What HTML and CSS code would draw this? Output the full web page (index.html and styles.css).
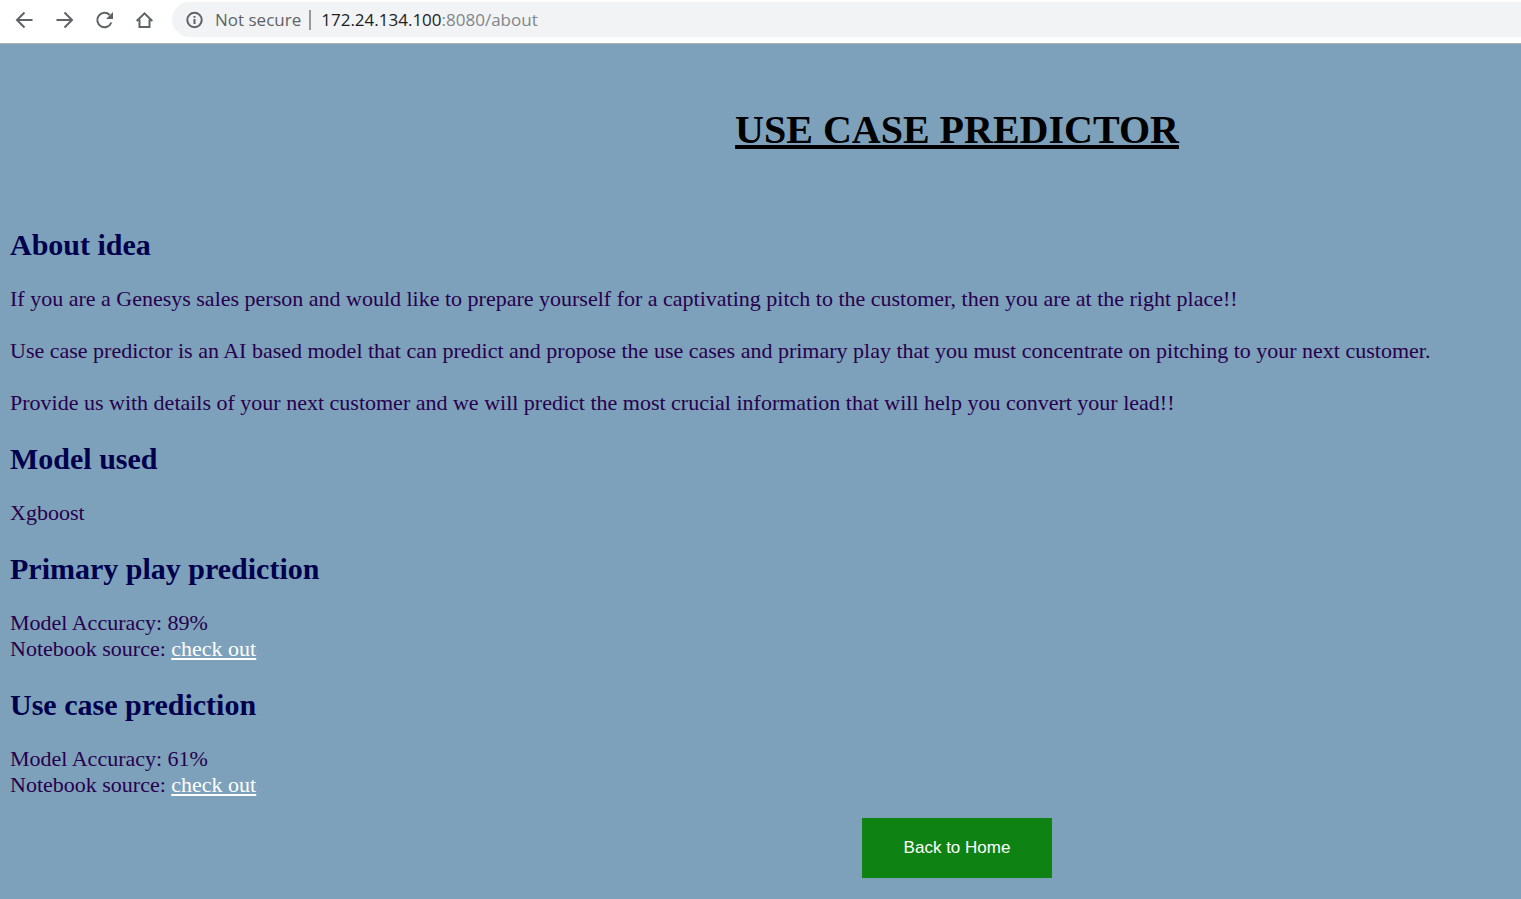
FILE: index.html
```html
<!DOCTYPE html>
<html lang="en">
<head>
<meta charset="utf-8">
<title>Use Case Predictor</title>
<link rel="stylesheet" href="styles.css">
</head>
<body>
<header class="toolbar">
  <nav class="controls" aria-label="Browser">
    <button class="tool" type="button" aria-label="Back"><svg viewBox="0 0 20 20"><path d="M18.500 10H3.500M10.500 2.500L3 10L10.500 17.500"/></svg></button>
    <button class="tool" type="button" aria-label="Forward"><svg viewBox="0 0 20 20"><path d="M2.500 10H17.500M10.500 2.500L18 10L10.500 17.500"/></svg></button>
    <button class="tool" type="button" aria-label="Reload"><svg viewBox="0 0 20 20"><path d="M17.300 12.500A7.200 7.200 0 1 1 15.700 5"/><path class="solid" d="M19 2V9H12Z"/></svg></button>
    <button class="tool" type="button" aria-label="Home"><svg viewBox="0 0 20 20"><path d="M2.700 11L10.500 3.300L18.300 11M5.500 9.500V17H15.500V9.500"/></svg></button>
  </nav>
  <div class="address">
    <svg class="info" viewBox="0 0 18 18"><circle cx="8.500" cy="9" r="7.200"/><path d="M8.500 8V13M8.500 5V6.800"/></svg>
    <span class="security">Not secure</span>
    <span class="divider"></span>
    <span class="url">172.24.134.100<span class="path">:8080/about</span></span>
  </div>
</header>
<main class="page">
  <h1 class="title">USE CASE PREDICTOR</h1>
  <h2 class="heading">About idea</h2>
  <p class="text">If you are a Genesys sales person and would like to prepare yourself for a captivating pitch to the customer, then you are at the right place!!</p>
  <p class="text">Use case predictor is an AI based model that can predict and propose the use cases and primary play that you must concentrate on pitching to your next customer.</p>
  <p class="text">Provide us with details of your next customer and we will predict the most crucial information that will help you convert your lead!!</p>
  <h2 class="heading">Model used</h2>
  <p class="text">Xgboost</p>
  <h2 class="heading">Primary play prediction</h2>
  <p class="text">Model Accuracy: 89%<br>Notebook source: <a class="link" href="#primary">check out</a></p>
  <h2 class="heading">Use case prediction</h2>
  <p class="text">Model Accuracy: 61%<br>Notebook source: <a class="link" href="#usecase">check out</a></p>
  <div class="actions"><button class="home" type="button">Back to Home</button></div>
</main>
</body>
</html>
```
FILE: styles.css
```css
* { box-sizing: border-box; }
body {
  margin: 0;
  min-height: 100vh;
  background: #7ea1bb;
  font-family: "Liberation Serif", "Times New Roman", serif;
}
.toolbar {
  display: flex;
  align-items: center;
  gap: 8px;
  padding: 2px 0 6px 4px;
  background: #fff;
  border-bottom: 1px solid #b3b3b3;
}
.controls { display: flex; }
.tool {
  display: flex;
  align-items: center;
  justify-content: center;
  width: 40px;
  height: 35px;
  padding: 0;
  border: 0;
  background: none;
}
.tool svg { width: 20px; height: 20px; }
.tool path, .info { fill: none; stroke: #5f6368; stroke-width: 2; }
.tool .solid { fill: #5f6368; stroke: none; }
.address {
  display: flex;
  flex: 1;
  align-items: center;
  height: 35px;
  padding-left: 14px;
  border-radius: 18px 0 0 18px;
  background: #f1f3f4;
  font-family: "Open Sans", "Noto Sans", sans-serif;
  font-size: 17px;
  white-space: nowrap;
}
.info { width: 18px; height: 18px; margin-right: 11px; }
.security { color: #5f6368; }
.divider { width: 2px; height: 20px; margin: 0 10px 0 8px; background: #96999c; }
.url { color: #202124; }
.path { color: #80868b; }
.page { padding: 63px 10px 21px; }
.title {
  margin: 0 0 75px;
  padding-left: 393px;
  color: #000;
  font-size: 40px;
  line-height: 46px;
  text-align: center;
  text-decoration: underline;
}
.heading {
  margin: 26px 0 24px;
  color: #00004d;
  font-size: 30px;
  line-height: 34px;
}
.text {
  margin: 0 0 26px;
  color: #26004d;
  font-size: 22px;
  line-height: 26px;
}
.link { color: #fff; }
.actions {
  display: flex;
  justify-content: center;
  margin-top: -6px;
  padding-left: 393px;
}
.home {
  width: 190px;
  height: 60px;
  border: 0;
  background: #0e8314;
  color: #fff;
  font-family: "Liberation Sans", Arial, sans-serif;
  font-size: 17px;
}
```
